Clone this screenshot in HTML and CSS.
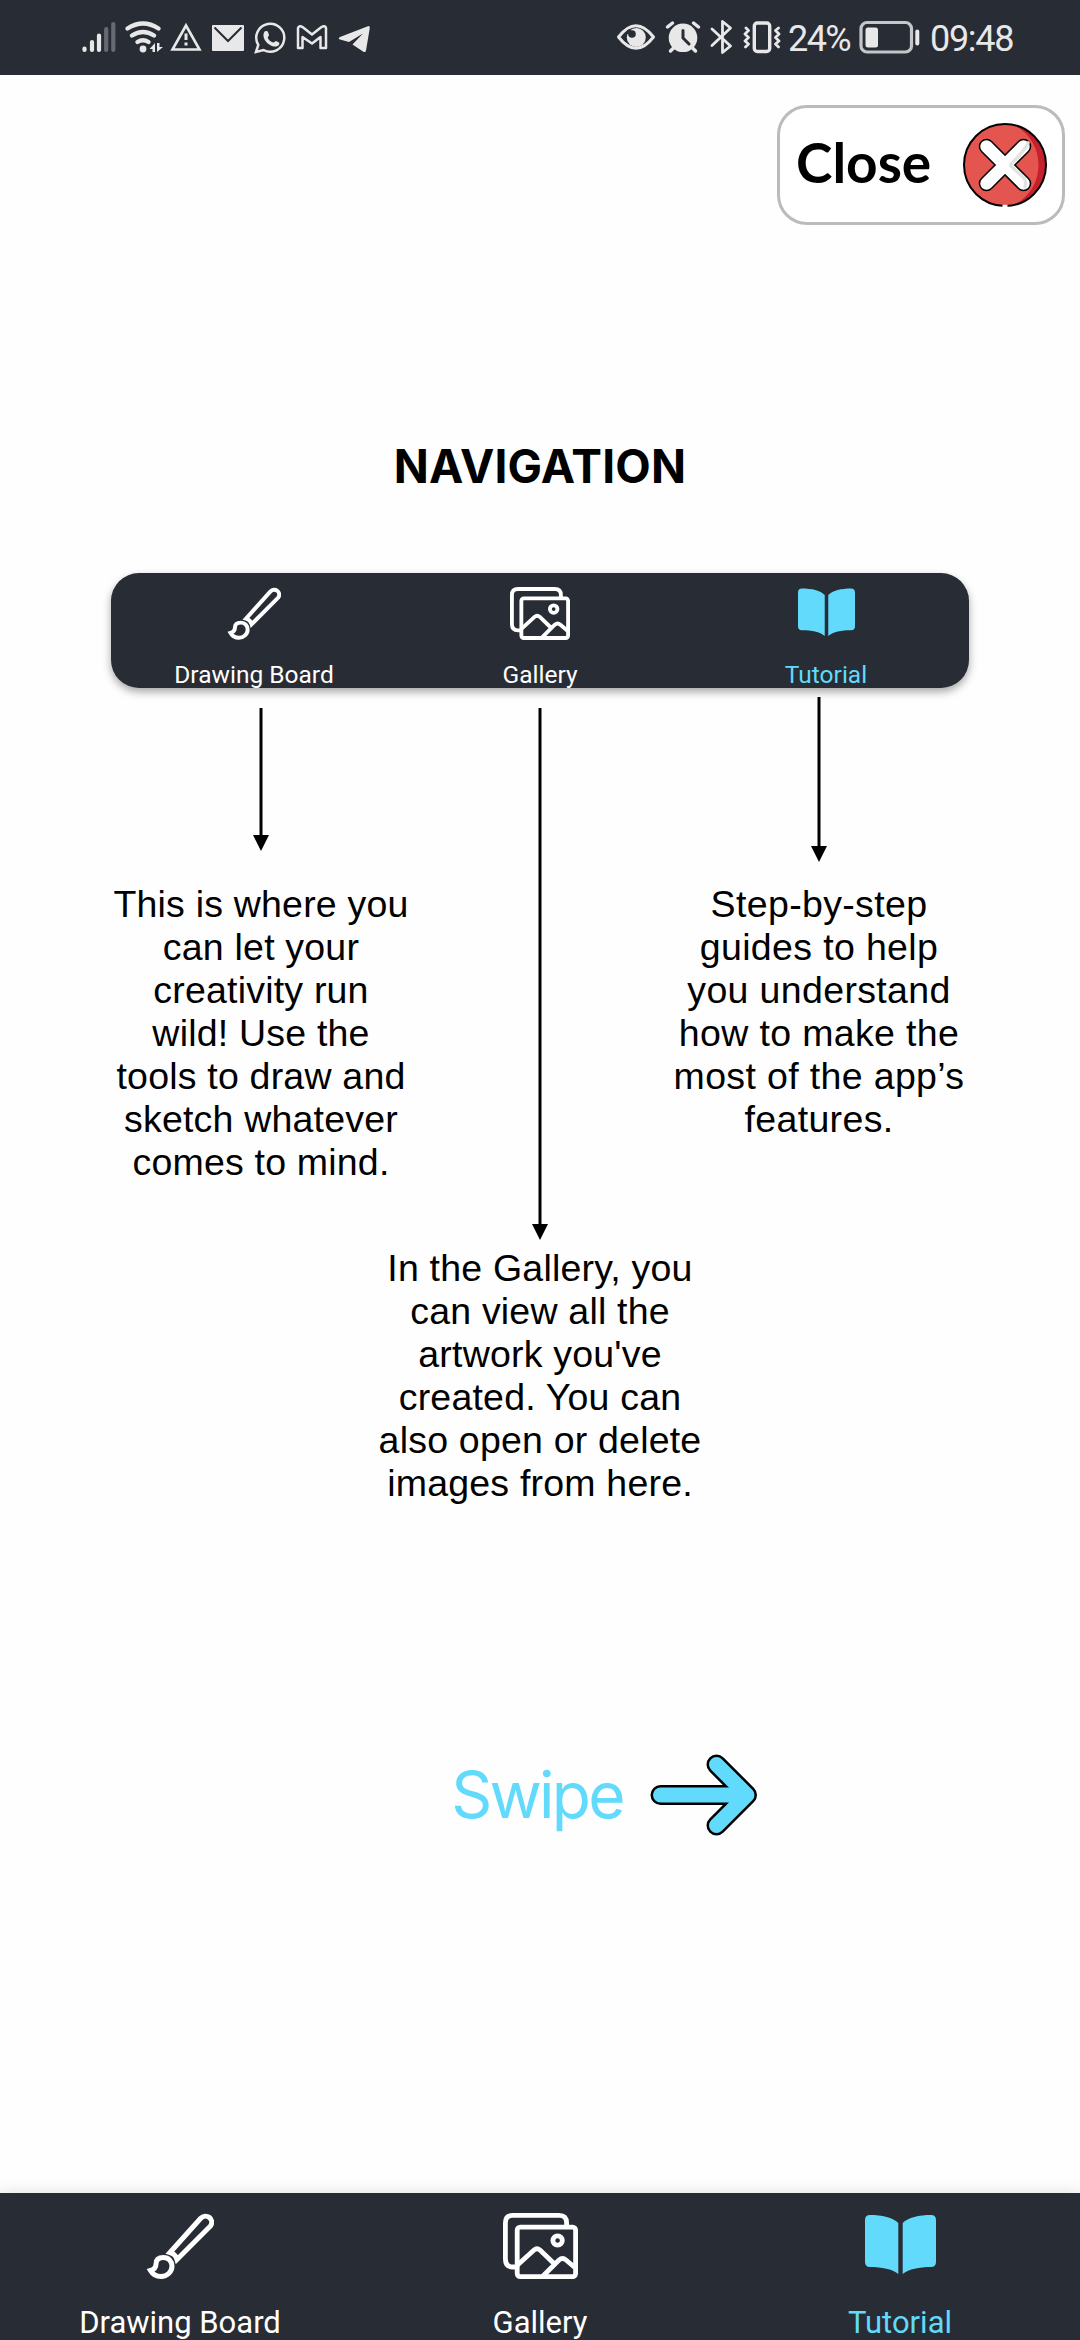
FILE: index.html
```html
<!DOCTYPE html>
<html lang="en">
<head>
<meta charset="utf-8">
<title>Tutorial</title>
<link rel="stylesheet" href="styles.css">
</head>
<body>
<svg class="defs" aria-hidden="true">
  <symbol id="brush" viewBox="0 0 68 66">
    <g fill="none" stroke="#fff" stroke-width="5">
      <path d="M24 39.5L54.5 5.5C60-.5 69 6 64.500 13L31 46.500Q29.500 41 24 39.500Z"/>
      <path d="M4.500 57.500Q10 56 10 51C10 46.500 13 44.500 17.500 44.500C22.500 44.500 26 48.500 26 53C26 59 21 63.500 15 63.500C10 63.500 6.500 61 4.500 57.500Z"/>
    </g>
  </symbol>
  <symbol id="gallery" viewBox="0 0 75 66">
    <g fill="none" stroke="#fff" stroke-width="4.800">
      <path d="M63.600 13V10Q63.600 2.400 56 2.400H10Q2.400 2.400 2.400 10V46Q2.400 54 10 54H13"/>
      <rect x="14.200" y="14.100" width="58.400" height="49.500" rx="3"/>
      <circle cx="54.600" cy="27.500" r="4.700"/>
      <path d="M14 52.500L31 37Q34 34.500 37 37L51 50.500M39.500 63.500L56 47Q59.500 44 63 47L73 55.500"/>
    </g>
  </symbol>
  <symbol id="book" viewBox="0 0 71 66">
    <path fill="#61dafb" d="M5 2C17 2 28 4.500 33.300 10V61C27 56 17 54 5 54Q0 54 0 49V7Q0 2 5 2ZM66 2C54 2 43 4.500 37.700 10V61C44 56 54 54 66 54Q71 54 71 49V7Q71 2 66 2Z"/>
  </symbol>
</svg>

<header class="status">
  <div class="status-left">
    <svg width="34" height="36" viewBox="82 20 34 36" stroke-linecap="round" stroke-width="4.200" stroke="#e8e8e8">
      <path d="M84.500 48.500V50M92 42V50M99 35.500V50"/><path stroke="#666a71" d="M106.200 29V50M113.300 24V50"/>
    </svg>
    <svg width="37" height="36" viewBox="124 20 37 36">
      <g fill="none" stroke="#e8e8e8" stroke-width="4.400" stroke-linecap="round"><path d="M127.500 28.500Q143 18.500 158.500 28.500M132 35.500Q143 28.500 154 35.500M137.500 42Q143 38.500 148.500 42"/></g>
      <circle cx="143" cy="49" r="3.400" fill="#e8e8e8"/><path fill="#e8e8e8" d="M155 43V52H152.500V49H149.500ZM157 43V52L163 47H159.500V43Z"/>
    </svg>
    <svg width="34" height="36" viewBox="169 20 34 36" fill="none" stroke="#e8e8e8" stroke-width="2.600">
      <path d="M186 25.500L172.500 49.500H199.500Z"/><path stroke-width="3" d="M186 33.500V40M186 42.500V45.500"/>
    </svg>
    <svg width="34" height="36" viewBox="211 20 34 36"><rect x="212" y="25" width="32" height="26" rx="1" fill="#e8e8e8"/><path d="M214.500 27.500L228 41L241.500 27.500" fill="none" stroke="#282c34" stroke-width="2"/></svg>
    <svg width="34" height="36" viewBox="253 20 34 36"><path d="M256 52L258.300 45A14 14 0 1 1 263.500 50Z" fill="none" stroke="#e8e8e8" stroke-width="2.500"/><path fill="#e8e8e8" d="M264.500 31.500C266 30.500 267.500 31 268 32L269 35C269 36 267.500 37 267.800 38C269 40.500 271 42 273.500 42.500C274.500 42.500 275 41 276 41L279 42.500C280 43.500 279 46 276.500 46.500C269 47.500 260.500 38 264.500 31.500Z"/></svg>
    <svg width="34" height="36" viewBox="295 20 34 36" fill="none" stroke="#e8e8e8" stroke-width="2.500" stroke-linejoin="round"><path d="M302.500 48H298V28Q299.500 25 302.500 27L312 34.500L321.500 27Q325 25 326 28V48H320.500V37L312 43.500L302.500 37Z"/></svg>
    <svg width="34" height="36" viewBox="337 20 34 36"><path fill="#e8e8e8" d="M368.500 26Q370 26 369.800 28L366 50.500Q365.500 53 363 51.500L352.500 44.500L363 33.500L349 42L340 39.500Q337.500 38.500 340 37Z"/></svg>
  </div>
  <div class="status-right">
    <svg width="39" height="36" viewBox="616 20 39 36"><path d="M617.500 37Q635 14.500 652.500 37Q635 59.500 617.500 37Z" fill="none" stroke="#e8e8e8" stroke-width="3" stroke-linejoin="round"/><circle cx="635.300" cy="37.500" r="9.500" fill="#e8e8e8"/><circle cx="631" cy="34" r="3.800" fill="#282c34"/><circle cx="628" cy="32" r="2.500" fill="#282c34"/></svg>
    <svg width="36" height="36" viewBox="664 20 36 36"><circle cx="682" cy="37.800" r="14.300" fill="#e8e8e8"/><path d="M672.500 48L669.500 51M691.500 48L694.500 51M666.500 27L671.500 23M697.500 27L692.500 23" stroke="#e8e8e8" stroke-width="3.500" stroke-linecap="round"/><path d="M682 30.500V38L688 44" fill="none" stroke="#282c34" stroke-width="3" stroke-linecap="round"/></svg>
    <svg width="24" height="36" viewBox="709 20 24 36" fill="none" stroke="#e8e8e8" stroke-width="2.800" stroke-linejoin="round" stroke-linecap="round"><path d="M711 29L729.500 46L721.500 52.500V21.500L729.500 28L711 45.500"/></svg>
    <svg width="38" height="36" viewBox="742 20 38 36" fill="none" stroke="#e8e8e8"><rect x="753.300" y="23" width="15.400" height="28.500" rx="3" stroke-width="3.400"/><path stroke-width="2.800" stroke-linecap="round" stroke-linejoin="round" d="M745 28L747.500 30.500L744 34L747.500 37.500L744 41L747.500 44L744.500 47M777.500 28L774.500 30.500L778 34L774.500 37.500L778 41L774.500 44L777.500 47"/></svg>
    <span class="percent">24%</span>
    <svg class="battery" width="61" height="36" viewBox="858 20 61 36"><rect x="860" y="22.500" width="50.500" height="29.500" rx="6" fill="none" stroke="#c4c6c9" stroke-width="3.200"/><rect x="864.500" y="27.500" width="12.500" height="20" rx="2.500" fill="#e8e8e8"/><path d="M916.300 31.500V43.500" stroke="#e8e8e8" stroke-width="4" stroke-linecap="round"/></svg>
    <span class="time">09:48</span>
  </div>
</header>

<main class="page">
  <button class="close">
    <span>Close</span>
    <svg width="84" height="84" viewBox="0 0 84 84">
      <circle cx="42" cy="42" r="40.500" fill="#c5202d"/>
      <path fill="#e5554f" d="M42 1.500H50C84 18 84 66 50 82.500H42A40.500 40.500 0 0 1 42 1.500Z"/>
      <circle cx="42" cy="42" r="41" fill="none" stroke="#000" stroke-width="2"/>
      <path d="M23.500 23.500L60.500 60.500M60.500 23.500L23.500 60.500" stroke="#000" stroke-width="15.500" stroke-linecap="round"/>
      <path d="M23.500 23.500L60.500 60.500M60.500 23.500L23.500 60.500" stroke="#fff" stroke-width="12.500" stroke-linecap="round"/>
      <path d="M65 20Q63 26 48 41M48 43L60 54Q64 58 62 64" fill="none" stroke="#e3e3e3" stroke-width="3.500" stroke-linecap="round"/>
      <path d="M39.500 83H44.500" stroke="#fff" stroke-width="2.500"/>
    </svg>
  </button>
  <h1 class="title">NAVIGATION</h1>
  <div class="mini nav">
    <div class="item"><svg width="54" height="53"><use href="#brush"/></svg><span>Drawing Board</span></div>
    <div class="item"><svg width="60" height="53"><use href="#gallery"/></svg><span>Gallery</span></div>
    <div class="item active"><svg width="57" height="53"><use href="#book"/></svg><span>Tutorial</span></div>
  </div>
  <div class="notes">
    <section class="note drawing">
      <div class="arrow"></div>
      <p>This is where you<br>can let your<br>creativity run<br>wild! Use the<br>tools to draw and<br>sketch whatever<br>comes to mind.</p>
    </section>
    <section class="note images">
      <div class="arrow"></div>
      <p>In the Gallery, you<br>can view all the<br>artwork you've<br>created. You can<br>also open or delete<br>images from here.</p>
    </section>
    <section class="note guides">
      <div class="arrow"></div>
      <p>Step-by-step<br>guides to help<br>you understand<br>how to make the<br>most of the app’s<br>features.</p>
    </section>
  </div>
  <div class="swipe">
    <span>Swipe</span>
    <svg width="108" height="82" viewBox="0 0 108 82">
      <g fill="none" stroke-linecap="round" stroke-linejoin="round">
        <path d="M10.500 41H95M66.500 10.500L97 41L66.500 71.500" stroke="#000" stroke-width="20"/>
        <path d="M10.500 41H95M66.500 10.500L97 41L66.500 71.500" stroke="#61dafb" stroke-width="15"/>
        <path d="M84 30V52L95 41Z" fill="#61dafb" stroke="none"/>
      </g>
    </svg>
  </div>
</main>

<nav class="tabs nav">
  <div class="item"><svg width="68" height="66"><use href="#brush"/></svg><span>Drawing Board</span></div>
  <div class="item"><svg width="75" height="66"><use href="#gallery"/></svg><span>Gallery</span></div>
  <div class="item active"><svg width="71" height="66"><use href="#book"/></svg><span>Tutorial</span></div>
</nav>
</body>
</html>
```

FILE: styles.css
```css
* { box-sizing: border-box; }
body {
  margin: 0;
  height: 2340px;
  display: flex;
  flex-direction: column;
  overflow: hidden;
  background: #fefefe;
  color: #000;
  font-family: "Liberation Sans", Arial, sans-serif;
}
svg { display: block; flex: none; overflow: visible; }
.defs { width: 0; height: 0; position: absolute; }

.status {
  height: 75px;
  padding: 0 68px 0 82px;
  display: flex;
  justify-content: space-between;
  background: #282c34;
  color: #e8e8e8;
  font: 36px/79px Roboto, sans-serif;
}
.status-left { display: flex; gap: 8px; padding-top: 20px; }
.status-right { display: flex; gap: 9px; }
.status-right svg { margin-top: 20px; }
.percent { width: 62px; margin-left: -2px; letter-spacing: -1.6px; white-space: nowrap; }
.time { width: 82px; margin-left: 1px; letter-spacing: -1.3px; white-space: nowrap; }

.page { flex: 1; display: flex; flex-direction: column; align-items: center; }
.close {
  align-self: flex-end;
  width: 288px;
  height: 120px;
  margin: 30px 15px 0 0;
  padding: 0 15px 0 16px;
  display: flex;
  align-items: center;
  justify-content: space-between;
  border: 3px solid #bbb;
  border-radius: 30px;
  background: #fff;
  color: #000;
  font: bold 55px/1 Lato, sans-serif;
}
.close span { padding-bottom: 5px; }
.title {
  margin: 213px 0 0;
  font: bold 46px/56px Inter, sans-serif;
  letter-spacing: .2px;
}

.nav { display: flex; background: #282c34; color: #fff; font-family: Roboto, sans-serif; }
.item { flex: 1; display: flex; flex-direction: column; align-items: center; white-space: nowrap; }
.active { color: #61dafb; }
.mini {
  width: 858px;
  height: 115px;
  margin-top: 79px;
  padding-top: 14px;
  border-radius: 28px;
  box-shadow: 0 4px 9px rgba(0, 0, 0, .35);
  font-size: 24.5px;
  line-height: 30px;
}
.mini span { margin-top: 20px; }

.notes { display: grid; grid-template-columns: repeat(3, 279px); height: 846px; }
.note { display: flex; flex-direction: column; align-items: center; padding-top: 20px; }
.note p {
  margin: 32px 0 0;
  text-align: center;
  white-space: nowrap;
  font-size: 37.5px;
  line-height: 43px;
  letter-spacing: .2px;
}
.images p { margin-top: 7px; }
.guides { padding-top: 9px; }
.guides p { margin-top: 21px; letter-spacing: .35px; }
.arrow {
  width: 16px;
  height: 143px;
  background: #000;
  clip-path: polygon(6.5px 0, 9.5px 0, 9.5px calc(100% - 16px), 100% calc(100% - 16px), 8px 100%, 0 calc(100% - 16px), 6.5px calc(100% - 16px));
}
.images .arrow { height: 532px; }
.guides .arrow { height: 165px; }

.swipe {
  display: flex;
  align-items: center;
  gap: 27px;
  margin: 220px 0 0 129px;
  height: 82px;
  color: #61dafb;
  font: 64px/82px Inter, sans-serif;
  letter-spacing: -2.8px;
}

.tabs {
  height: 147px;
  padding-top: 20px;
  box-shadow: 0 0 16px rgba(0, 0, 0, .12);
  font-size: 31px;
  line-height: 36px;
}
.tabs span { margin-top: 26px; }
```
